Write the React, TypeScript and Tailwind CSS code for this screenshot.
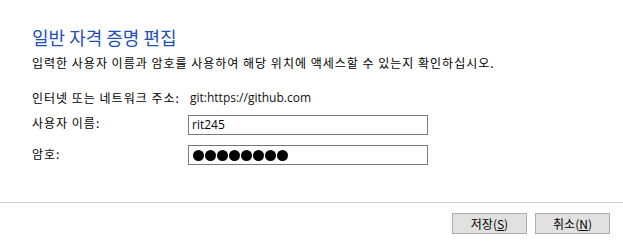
export default function App() {
  return (
    <div
      className="w-[623px] h-[251px] bg-white text-black flex flex-col overflow-hidden"
      style={{ fontFamily: '"Noto Sans CJK KR", "Noto Sans", sans-serif' }}
    >
      {/* Content */}
      <div className="flex-1 pl-[32px] pt-[25px]">
        <h1 className="text-[18px] leading-[24px] text-[#1f4fb8] font-normal">
          일반 자격 증명 편집
        </h1>
        <p className="mt-[6px] text-[12px] leading-[16px] tracking-[1px]">
          입력한 사용자 이름과 암호를 사용하여 해당 위치에 액세스할 수 있는지 확인하십시오.
        </p>

        <div className="mt-[19px] flex flex-col">
          <div className="flex items-start h-[25px]">
            <span className="w-[158px] text-[12px] leading-[16px] tracking-[1px]">
              인터넷 또는 네트워크 주소:
            </span>
            <span
              className="text-[12px] leading-[16px] text-[#111]"
              style={{ fontFamily: '"Open Sans", "Noto Sans", sans-serif' }}
            >
              git:https://github.com
            </span>
          </div>
          <div className="flex items-start h-[30px]">
            <span className="w-[156px] text-[12px] leading-[16px] tracking-[1px]">사용자 이름:</span>
            <div className="w-[240px] h-[20px] border border-[#7a7a7a] flex items-center px-[3px]">
              <span
                className="text-[12px] leading-[16px]"
                style={{ fontFamily: '"Open Sans", "Noto Sans", sans-serif' }}
              >
                rit245
              </span>
            </div>
          </div>
          <div className="flex items-start h-[30px]">
            <span className="w-[156px] text-[12px] leading-[16px] pt-[1px] tracking-[1px]">암호:</span>
            <div className="w-[240px] h-[20px] border border-[#7a7a7a] flex items-center gap-[1px] px-[4px]">
              {Array.from({ length: 8 }).map((_, i) => (
                <span key={i} className="w-[11px] h-[11px] rounded-full bg-black" />
              ))}
            </div>
          </div>
        </div>
      </div>

      {/* Footer */}
      <div className="border-t border-[#cccccc] h-[49px] flex justify-end items-start pt-[10px] pr-[13px] gap-[8px]">
        <button className="w-[75px] h-[21px] bg-[#e1e1e1] border border-[#adadad] text-[12px] leading-[16px] flex items-center justify-center">
          저장(<span className="underline">S</span>)
        </button>
        <button className="w-[75px] h-[21px] bg-[#e1e1e1] border border-[#adadad] text-[12px] leading-[16px] flex items-center justify-center">
          취소(<span className="underline">N</span>)
        </button>
      </div>
    </div>
  );
}
